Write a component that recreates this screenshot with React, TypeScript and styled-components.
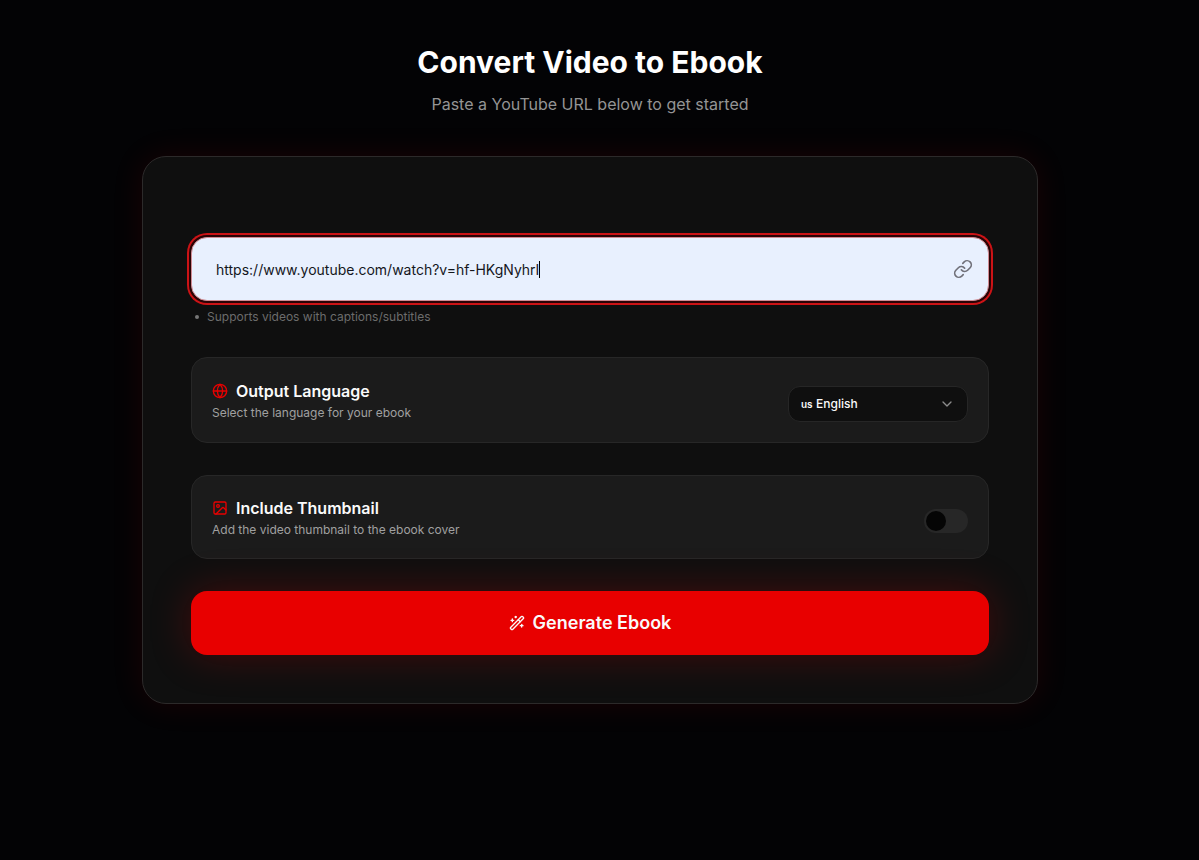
import { useLayoutEffect, useRef, useState } from 'react';
import styled, { createGlobalStyle } from 'styled-components';
import { ChevronDown, Globe, Image, Link, WandSparkles } from 'lucide-react';

const GlobalStyle = createGlobalStyle`
  *, *::before, *::after { box-sizing: border-box; }
  html { background: #030305; }
  body {
    margin: 0;
    background: #030305;
    color: #fafafa;
    font-family: Inter, "Liberation Sans", sans-serif;
  }
  button, input, select { font-family: inherit; }
  h1, h2, p { margin: 0; }
`;

const Page = styled.main`
  display: flex;
  flex-direction: column;
  align-items: center;
  gap: 40px;
  min-height: 100vh;
  padding: 42px 43px 40px 24px;
`;

const Header = styled.header`
  display: flex;
  flex-direction: column;
  gap: 10px;
  text-align: center;
`;

const Title = styled.h1`
  font-size: 30px;
  line-height: 40px;
  font-weight: 700;
  color: #ffffff;
`;

const Subtitle = styled.p`
  font-size: 16px;
  line-height: 24px;
  color: #949494;
`;

const Card = styled.form`
  display: flex;
  flex-direction: column;
  gap: 32px;
  width: 100%;
  max-width: 896px;
  padding: 80px 48px 48px;
  background: #0f0f0f;
  border: 1px solid #2c2a2a;
  border-radius: 24px;
  box-shadow: 0 0 32px rgba(232, 0, 0, 0.1);
`;

const Field = styled.div`
  display: flex;
  flex-direction: column;
  gap: 8px;
`;

const InputShell = styled.div`
  position: relative;
  display: flex;
  align-items: center;
  height: 64px;
  padding: 0 15px 0 24px;
  background: #e8f0fe;
  border: 1px solid #d08c94;
  border-radius: 16px;
  box-shadow: 0 0 0 2px #2a0406, 0 0 0 4px #cc1316;
`;

const UrlInput = styled.input`
  flex: 1;
  min-width: 0;
  height: 100%;
  padding: 0;
  border: 0;
  outline: 0;
  background: transparent;
  color: #14161c;
  caret-color: transparent;
  font-size: 14px;
  line-height: 20px;
`;

const Caret = styled.span`
  position: absolute;
  top: 23px;
  width: 1px;
  height: 17px;
  background: #000000;
`;

const LinkIcon = styled(Link)`
  flex: none;
  color: #71717a;
`;

const Hint = styled.p`
  display: flex;
  align-items: center;
  gap: 8px;
  padding-left: 4px;
  font-size: 12px;
  line-height: 16px;
  color: #6c6c6c;

  &::before {
    content: '';
    width: 4px;
    height: 4px;
    border-radius: 50%;
    background: #777777;
  }
`;

const Option = styled.section`
  display: flex;
  align-items: center;
  justify-content: space-between;
  gap: 16px;
  padding: 20px;
  background: #1b1b1b;
  border: 1px solid #272727;
  border-radius: 16px;
`;

const OptionText = styled.div`
  display: flex;
  flex-direction: column;
  gap: 2px;
`;

const OptionTitle = styled.h2`
  display: flex;
  align-items: center;
  gap: 8px;
  font-size: 16px;
  line-height: 24px;
  font-weight: 600;
  color: #fafafa;

  svg {
    flex: none;
    color: #e80000;
  }
`;

const OptionNote = styled.p`
  font-size: 12px;
  line-height: 16px;
  color: #a0a0a0;
`;

const SelectShell = styled.div`
  position: relative;
  display: flex;
  align-items: center;
  flex: none;
  width: 180px;
  height: 36px;
  margin: 8px 0 0;
  background: #0f0f0f;
  border: 1px solid #262626;
  border-radius: 12px;
`;

const Region = styled.span`
  position: absolute;
  left: 12px;
  font-size: 10px;
  line-height: 16px;
  font-weight: 600;
  color: #fafafa;
  pointer-events: none;
`;

const LanguageSelect = styled.select`
  width: 100%;
  height: 100%;
  padding: 0 32px 2px 27px;
  appearance: none;
  border: 0;
  border-radius: 12px;
  outline: 0;
  background: transparent;
  color: #fafafa;
  font-size: 12px;
  font-weight: 500;
`;

const Chevron = styled(ChevronDown)`
  position: absolute;
  right: 12px;
  color: #8c8c8c;
  pointer-events: none;
`;

const Switch = styled.input`
  flex: none;
  width: 44px;
  height: 24px;
  margin: 8px 0 0;
  padding: 2px;
  appearance: none;
  border-radius: 12px;
  background: #272727;
  cursor: pointer;

  &::before {
    content: '';
    display: block;
    width: 20px;
    height: 20px;
    border-radius: 50%;
    background: #050505;
  }

  &:checked {
    background: #e80000;
  }

  &:checked::before {
    margin-left: 20px;
  }
`;

const GenerateButton = styled.button`
  display: flex;
  align-items: center;
  justify-content: center;
  gap: 8px;
  height: 64px;
  padding: 0 32px;
  border: 0;
  border-radius: 16px;
  background: #e80000;
  color: #fafafa;
  font-size: 18px;
  line-height: 28px;
  font-weight: 600;
  box-shadow: 0 0 40px rgba(232, 0, 0, 0.25);
  cursor: pointer;
`;

export default function App() {
  const [url, setUrl] = useState('https://www.youtube.com/watch?v=hf-HKgNyhrI');
  const [caretX, setCaretX] = useState(0);
  const inputRef = useRef<HTMLInputElement>(null);

  useLayoutEffect(() => {
    const input = inputRef.current;
    const context = document.createElement('canvas').getContext('2d');
    if (!input || !context) return;
    const style = getComputedStyle(input);
    context.font = `${style.fontWeight} ${style.fontSize} ${style.fontFamily}`;
    setCaretX(input.offsetLeft + Math.round(context.measureText(url).width));
  }, [url]);

  return (
    <>
      <GlobalStyle />
      <Page>
        <Header>
          <Title>Convert Video to Ebook</Title>
          <Subtitle>Paste a YouTube URL below to get started</Subtitle>
        </Header>

        <Card onSubmit={(event) => event.preventDefault()}>
          <Field>
            <InputShell>
              <UrlInput
                ref={inputRef}
                type="text"
                aria-label="YouTube URL"
                value={url}
                onChange={(event) => setUrl(event.target.value)}
              />
              <Caret style={{ left: caretX }} />
              <LinkIcon size={20} />
            </InputShell>
            <Hint>Supports videos with captions/subtitles</Hint>
          </Field>

          <Option>
            <OptionText>
              <OptionTitle>
                <Globe size={16} />
                <label htmlFor="language">Output Language</label>
              </OptionTitle>
              <OptionNote>Select the language for your ebook</OptionNote>
            </OptionText>
            <SelectShell>
              <Region>us</Region>
              <LanguageSelect id="language" defaultValue="en">
                <option value="en">English</option>
              </LanguageSelect>
              <Chevron size={16} />
            </SelectShell>
          </Option>

          <Option>
            <OptionText>
              <OptionTitle>
                <Image size={16} />
                <label htmlFor="thumbnail">Include Thumbnail</label>
              </OptionTitle>
              <OptionNote>Add the video thumbnail to the ebook cover</OptionNote>
            </OptionText>
            <Switch id="thumbnail" type="checkbox" role="switch" />
          </Option>

          <GenerateButton type="submit">
            <WandSparkles size={16} />
            Generate Ebook
          </GenerateButton>
        </Card>
      </Page>
    </>
  );
}
